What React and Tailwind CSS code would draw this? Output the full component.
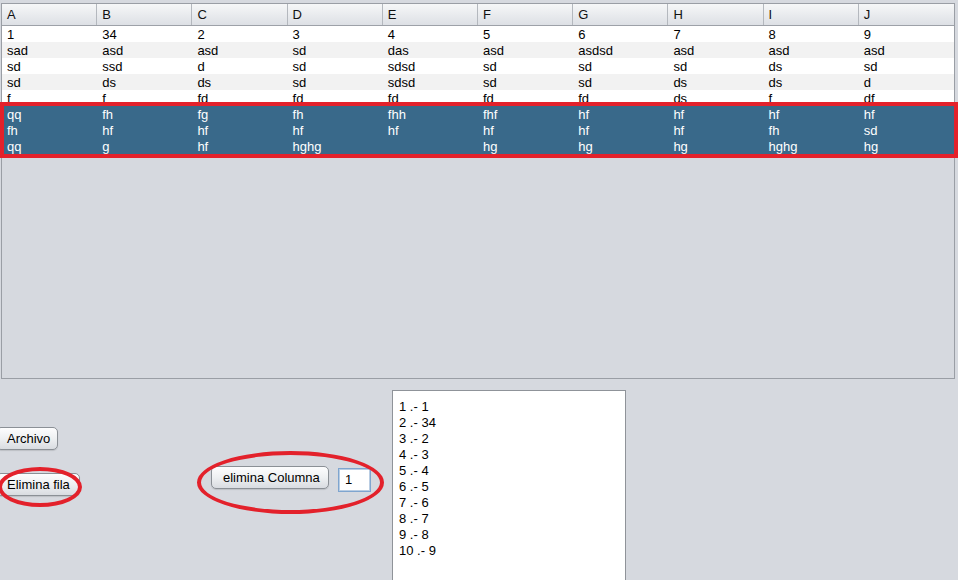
const columns = ["A", "B", "C", "D", "E", "F", "G", "H", "I", "J"]

const rows = [
    ["1", "34", "2", "3", "4", "5", "6", "7", "8", "9"],
    ["sad", "asd", "asd", "sd", "das", "asd", "asdsd", "asd", "asd", "asd"],
    ["sd", "ssd", "d", "sd", "sdsd", "sd", "sd", "sd", "ds", "sd"],
    ["sd", "ds", "ds", "sd", "sdsd", "sd", "sd", "ds", "ds", "d"],
    ["f", "f", "fd", "fd", "fd", "fd", "fd", "ds", "f", "df"],
    ["qq", "fh", "fg", "fh", "fhh", "fhf", "hf", "hf", "hf", "hf"],
    ["fh", "hf", "hf", "hf", "hf", "hf", "hf", "hf", "fh", "sd"],
    ["qq", "g", "hf", "hghg", "", "hg", "hg", "hg", "hghg", "hg"],
]

const listItems = ["1", "34", "2", "3", "4", "5", "6", "7", "8", "9"]

function NimbusButton({children, className}) {
    return (
        <button
            className={"h-[23px] rounded-[5px] border border-[#8b9096] bg-linear-to-b from-[#fdfdfe] via-[#eef0f2] to-[#d9dce1] text-left text-[13px] leading-none text-black shadow-[0_1px_1px_rgba(0,0,0,0.12)] " + className}
        >
            {children}
        </button>
    )
}

export default function App() {
    return (
        <div className="relative h-[580px] w-[958px] overflow-hidden bg-[#d6d9df] font-['Liberation_Sans',Arial,sans-serif] text-[13px] text-black">
            {/* table scroll pane */}
            <div className="ml-[1px] mt-[3px] h-[376px] w-[954px] border border-[#9a9ea5] bg-[#d6d9df]">
                <div className="grid h-[22px] grid-cols-10 border-b border-[#9da1a8] bg-linear-to-b from-[#f6f7f8] to-[#dde0e5]">
                    {columns.map((c, i) => (
                        <div
                            key={c}
                            className={"flex items-center pl-[5px] leading-none text-[#111] " + (i < 9 ? "border-r border-[#b4b8be]" : "")}
                        >
                            {c}
                        </div>
                    ))}
                </div>
                {rows.map((r, ri) => {
                    const selected = ri >= 5
                    let bg = ri % 2 === 0 ? "bg-white" : "bg-[#f2f2f2]"
                    if (selected) bg = "bg-[#39698a] text-white"
                    return (
                        <div key={ri} className={"grid h-[16px] grid-cols-10 leading-[17px] " + bg}>
                            {r.map((cell, ci) => (
                                <div key={ci} className="pl-[5px]">{cell}</div>
                            ))}
                        </div>
                    )
                })}
            </div>

            {/* lower controls */}
            <div className="flex h-[201px]">
                <div className="flex w-[196px] flex-col items-start pt-[48px]">
                    <NimbusButton className="-ml-[4px] w-[62px] pl-[10px]">Archivo</NimbusButton>
                    <NimbusButton className="-ml-[4px] mt-[23px] w-[84px] pl-[10px]">Elimina fila</NimbusButton>
                </div>
                <div className="flex w-[196px] items-start gap-[9px] pl-[15px] pt-[87px]">
                    <NimbusButton className="w-[118px] pl-[11px]">elimina Columna</NimbusButton>
                    <div className="mt-[2px] flex h-[24px] w-[33px] items-center border border-[#7fa5cf] bg-white pl-[6px] shadow-[inset_0_0_0_1px_#b9cde3]">
                        1
                    </div>
                </div>
                <div className="pt-[11px]">
                    <div className="h-[220px] w-[234px] border border-[#8f9399] bg-white pl-[6px] pt-[8px]">
                        {listItems.map((v, i) => (
                            <div key={i} className="h-[16px] leading-[16px]">
                                {i + 1} .- {v}
                            </div>
                        ))}
                    </div>
                </div>
            </div>

            {/* red annotations */}
            <div className="absolute left-0 top-[102px] h-[56px] w-[958px] border-4 border-[#e3212b]"></div>
            <div className="absolute left-[-2px] top-[467px] h-[40px] w-[84px] rounded-[50%] border-4 border-[#e3212b]"></div>
            <div className="absolute left-[197px] top-[451px] h-[63px] w-[187px] rounded-[50%] border-4 border-[#e3212b]"></div>
        </div>
    )
}
